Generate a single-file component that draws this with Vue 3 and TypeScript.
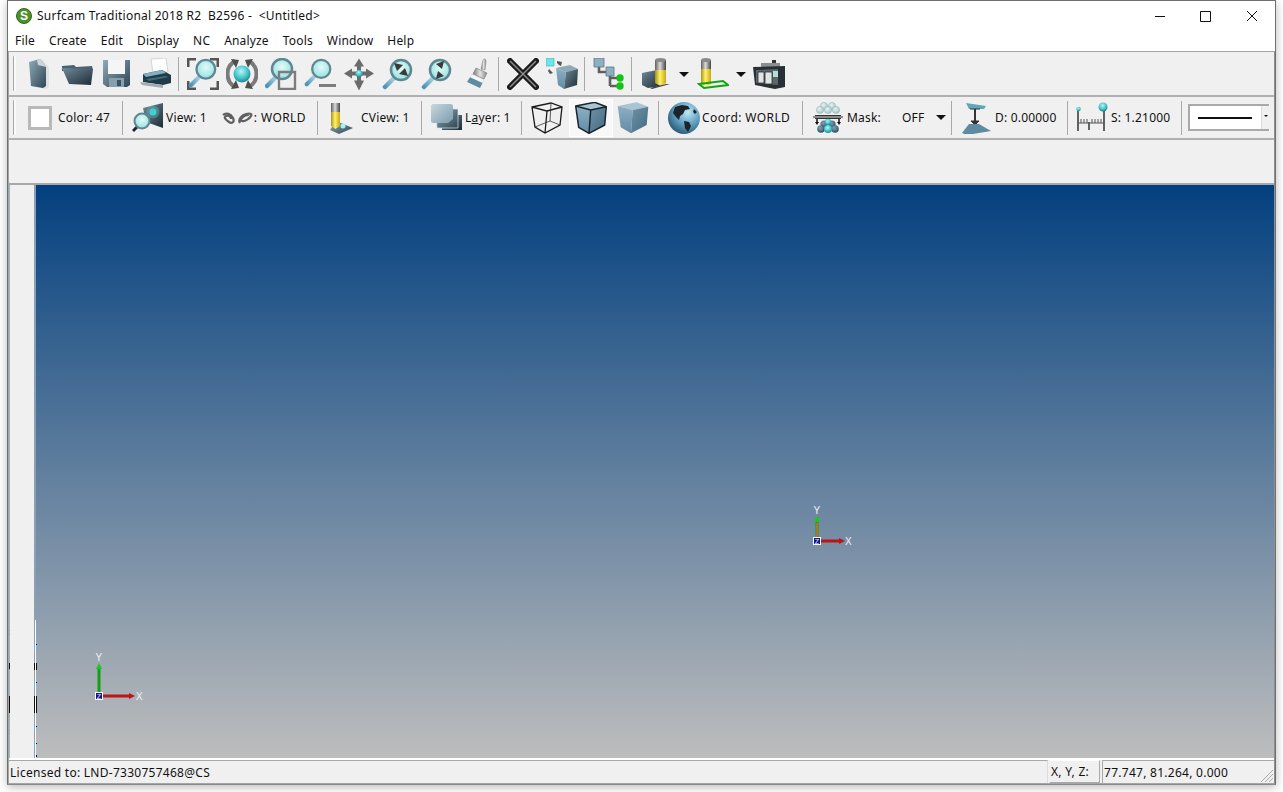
<script setup lang="ts">
// ツールバーの定義
interface Tool {
  icon?: string;
  w: number;
  arrow?: boolean;
}

const menus = ["File", "Create", "Edit", "Display", "NC", "Analyze", "Tools", "Window", "Help"];

const mainTools: Tool[] = [
  { w: 3 },
  { icon: "new", w: 39 },
  { icon: "open", w: 39 },
  { icon: "save", w: 39 },
  { icon: "print", w: 39 },
  { w: 0 },
  { icon: "fit", w: 39 },
  { icon: "orbit", w: 39 },
  { icon: "zwin", w: 39 },
  { icon: "zprev", w: 39 },
  { icon: "pan", w: 39 },
  { icon: "zin", w: 39 },
  { icon: "zout", w: 39 },
  { icon: "brush", w: 39 },
  { w: 0 },
  { icon: "del", w: 39 },
  { icon: "xform", w: 39 },
  { w: 0 },
  { icon: "tree", w: 39 },
  { w: 0 },
  { icon: "tool", w: 57, arrow: true },
  { icon: "tool2", w: 56, arrow: true },
  { icon: "machine", w: 39 }
];

// 左パネル下部に残る描画ノイズ（座標は画面基準）
const ticks = [
  { x: 35, y: 620, h: 138, c: "#fff" },
  { x: 9, y: 663, h: 6, c: "#111" },
  { x: 9, y: 696, h: 17, c: "#111" },
  { x: 9, y: 630, h: 1, c: "#999" },
  { x: 9, y: 634, h: 1, c: "#999" },
  { x: 9, y: 669, h: 1, c: "#999" },
  { x: 9, y: 716, h: 1, c: "#999" },
  { x: 9, y: 730, h: 1, c: "#999" },
  { x: 9, y: 733, h: 1, c: "#999" },
  { x: 34, y: 644, h: 6, c: "#5fb6e6" },
  { x: 34, y: 663, h: 7, c: "#111" },
  { x: 36, y: 663, h: 7, c: "#111" },
  { x: 34, y: 682, h: 6, c: "#5fb6e6" },
  { x: 34, y: 696, h: 17, c: "#111" },
  { x: 36, y: 696, h: 17, c: "#111" },
  { x: 34, y: 726, h: 5, c: "#5fb6e6" },
  { x: 34, y: 743, h: 6, c: "#5fb6e6" },
  { x: 36, y: 644, h: 1, c: "#111" },
  { x: 36, y: 682, h: 1, c: "#111" },
  { x: 36, y: 726, h: 1, c: "#111" },
  { x: 36, y: 743, h: 1, c: "#111" },
  { x: 36, y: 755, h: 2, c: "#111" }
];
</script>

<template>
  <svg class="defs" width="0" height="0" aria-hidden="true">
    <defs>
      <linearGradient id="steel" x1="0" y1="0" x2="1" y2="1">
        <stop offset="0" stop-color="#8fabb9" />
        <stop offset="1" stop-color="#2f4653" />
      </linearGradient>
      <linearGradient id="dark" x1="0" y1="0" x2="1" y2="1">
        <stop offset="0" stop-color="#6f8b99" />
        <stop offset="1" stop-color="#1d2c35" />
      </linearGradient>
      <linearGradient id="pale" x1="0" y1="0" x2="1" y2="1">
        <stop offset="0" stop-color="#c9d7de" />
        <stop offset="1" stop-color="#7b9cae" />
      </linearGradient>
      <radialGradient id="lens" cx="0.5" cy="0.4" r="0.6">
        <stop offset="0" stop-color="#e2faf7" />
        <stop offset="1" stop-color="#97e0df" />
      </radialGradient>
      <radialGradient id="ball" cx="0.45" cy="0.35" r="0.65">
        <stop offset="0" stop-color="#b9f5f2" />
        <stop offset="0.6" stop-color="#45c4ca" />
        <stop offset="1" stop-color="#20858f" />
      </radialGradient>
      <radialGradient id="sphere" cx="0.4" cy="0.35" r="0.7">
        <stop offset="0" stop-color="#e4f2f2" />
        <stop offset="1" stop-color="#9fc4c6" />
      </radialGradient>
      <radialGradient id="sphered" cx="0.4" cy="0.35" r="0.7">
        <stop offset="0" stop-color="#7fa4b6" />
        <stop offset="1" stop-color="#2b4a5c" />
      </radialGradient>
      <linearGradient id="handle" x1="0" y1="1" x2="1" y2="0">
        <stop offset="0" stop-color="#4d93b5" />
        <stop offset="1" stop-color="#a9d6e6" />
      </linearGradient>
      <linearGradient id="cyl" x1="0" y1="0" x2="1" y2="0">
        <stop offset="0" stop-color="#5f5f5f" />
        <stop offset="0.45" stop-color="#dadada" />
        <stop offset="1" stop-color="#444" />
      </linearGradient>
      <linearGradient id="yel" x1="0" y1="0" x2="1" y2="0">
        <stop offset="0" stop-color="#a89317" />
        <stop offset="0.45" stop-color="#fff26a" />
        <stop offset="1" stop-color="#c9a812" />
      </linearGradient>
      <linearGradient id="cubel" x1="0" y1="0" x2="0" y2="1">
        <stop offset="0" stop-color="#8db0c4" />
        <stop offset="1" stop-color="#628ba6" />
      </linearGradient>
      <linearGradient id="cuber" x1="0" y1="0" x2="1" y2="1">
        <stop offset="0" stop-color="#6e93a9" />
        <stop offset="1" stop-color="#446a80" />
      </linearGradient>
      <linearGradient id="metal" x1="0" y1="0" x2="1" y2="0">
        <stop offset="0" stop-color="#777" />
        <stop offset="0.5" stop-color="#e2e2e2" />
        <stop offset="1" stop-color="#888" />
      </linearGradient>
      <radialGradient id="earth" cx="0.62" cy="0.32" r="0.8">
        <stop offset="0" stop-color="#bfe6f5" />
        <stop offset="0.5" stop-color="#5d9ec0" />
        <stop offset="1" stop-color="#1c4660" />
      </radialGradient>

      <symbol id="i-new" viewBox="0 0 32 32">
        <path d="M7 4l11-3 6 8v19l-3 2-12-2z" fill="#d0d0d0" transform="translate(2 1)" opacity=".5" />
        <path d="M6 4l11-3 6 8v19l-3 2-12-2z" fill="url(#steel)" />
        <path d="M14 2l3-1 6 8-8-2z" fill="#c9d8e0" />
      </symbol>
      <symbol id="i-open" viewBox="0 0 32 32">
        <path d="M0 8l12-1 2 2 16-1 1 4-31 1z" fill="#49626e" />
        <path d="M0 10l31 1-2 16-22-1z" fill="url(#dark)" />
      </symbol>
      <symbol id="i-save" viewBox="0 0 32 32">
        <path d="M2 2h27v25l-3 2H6l-4-3z" fill="url(#steel)" />
        <path d="M7 2h17v14H7z" fill="#f5f5f5" />
        <path d="M8 20h15v9H8z" fill="#88a0ad" />
        <path d="M16 22h4v6h-4z" fill="#3c5361" />
      </symbol>
      <symbol id="i-print" viewBox="0 0 32 32">
        <path d="M11 1l15-1 2 14-15 1z" fill="#fdfdfd" stroke="#bdbdbd" stroke-width=".6" />
        <path d="M3 16l19-4 9 5v8l-8 2-20-3z" fill="#1f3a48" />
        <path d="M3 16l19-4 4 3-20 4z" fill="#7fb0c4" />
        <path d="M6 21l19-3 4 1-20 4z" fill="#46697a" />
        <path d="M0 24l23 3v3L2 27z" fill="#a2abaf" />
      </symbol>
      <symbol id="i-lens" viewBox="0 0 32 32">
        <path d="M12 20L3 29" stroke="url(#handle)" stroke-width="4.500" stroke-linecap="round" />
        <circle cx="19" cy="12" r="10" fill="url(#lens)" stroke="#5e8795" stroke-width="2.500" />
      </symbol>
      <symbol id="i-fit" viewBox="0 0 32 32">
        <path d="M1 9V1h8M23 1h8v8M31 23v8h-8M9 31H1v-8" fill="none" stroke="#555" stroke-width="3" />
        <use href="#i-lens" x="1" y="0" width="30" height="30" />
      </symbol>
      <symbol id="i-orbit" viewBox="0 0 32 32">
        <path d="M9 3C-1 9-1 23 9 29M23 3c10 6 10 20 0 26" fill="none" stroke="#7a7a7a" stroke-width="4" />
        <path d="M5 1l8 1-3 8zM27 1l-8 1 3 8zM5 31l8-1-3-8zM27 31l-8-1 3-8z" fill="#4e4e4e" />
        <circle cx="16" cy="16" r="8.500" fill="url(#ball)" />
      </symbol>
      <symbol id="i-zwin" viewBox="0 0 32 32">
        <path d="M11 19L2 28" stroke="url(#handle)" stroke-width="4.500" stroke-linecap="round" />
        <circle cx="17" cy="11" r="10" fill="url(#lens)" stroke="#5e8795" stroke-width="2.500" />
        <path d="M14 14h16v17H14z" fill="none" stroke="#7d7d7d" stroke-width="2.400" />
      </symbol>
      <symbol id="i-zprev" viewBox="0 0 32 32">
        <use href="#i-lens" width="29" height="29" />
        <path d="M15 26h17v3H15z" fill="#7d7d7d" />
      </symbol>
      <symbol id="i-pan" viewBox="0 0 32 32">
        <path d="M16 1l5 8h-3v5h5v-3l8 5-8 5v-3h-5v5h3l-5 10-5-10h3v-5H9v3l-8-5 8-5v3h5V9h-3z" fill="#6b6b6b" transform="translate(0 -.5)" />
        <circle cx="16" cy="15.500" r="3.600" fill="url(#ball)" />
      </symbol>
      <symbol id="i-zin" viewBox="0 0 32 32">
        <use href="#i-lens" />
        <path d="M13 6l9 2-6 6zM27 19l-9-2 6-6z" fill="#3a3a3a" transform="translate(-1 -1)" />
      </symbol>
      <symbol id="i-zout" viewBox="0 0 32 32">
        <use href="#i-lens" />
        <path d="M23 3l-2 8-6-5zM15 21l2-8 6 5z" fill="#3a3a3a" />
      </symbol>
      <symbol id="i-brush" viewBox="0 0 32 32">
        <path d="M21 11l2-9c1-2 3-1 3 1l-1 9z" fill="url(#metal)" stroke="#8a8a8a" stroke-width=".6" />
        <path d="M16 10l11 5-3 6-11-5z" fill="url(#metal)" stroke="#777" stroke-width=".6" />
        <path d="M12 16l12 6-4 8-13-6z" fill="#5f8ba3" />
        <path d="M12 16l12 6-1.500 3-13-6z" fill="#f7f7f7" />
      </symbol>
      <symbol id="i-del" viewBox="0 0 32 32">
        <path d="M3 3l26 26M29 3L3 29" stroke="#1c1c1c" stroke-width="6" stroke-linecap="round" />
        <path d="M3 3l26 26M29 3L3 29" stroke="#8c8c8c" stroke-width="1.500" />
      </symbol>
      <symbol id="i-xform" viewBox="0 0 32 32">
        <path d="M0 0h8v8H0z" fill="#6be6ea" stroke="#4fa5a8" stroke-width=".6" />
        <path d="M11 3l5 1-1 4-2-1-2-2zM3 11l4 4-3 1-2-3z" fill="#555" />
        <path d="M10 10l14-3 8 4-12 3z" fill="#8fa9b7" />
        <path d="M10 10l10 4-2 17-6-4z" fill="url(#cubel)" />
        <path d="M20 14l12-3-1 16-13 4z" fill="url(#dark)" />
      </symbol>
      <symbol id="i-tree" viewBox="0 0 32 32">
        <path d="M6 9v5h8M17 18v10M17 20h7M17 28h7" fill="none" stroke="#5f5f5f" stroke-width="2.600" />
        <path d="M1 0h10v9H1zM13 9h8v9h-8z" fill="#8dafc1" stroke="#5c7787" stroke-width=".8" />
        <circle cx="27" cy="20" r="3.700" fill="#14c414" />
        <circle cx="27" cy="28" r="3.700" fill="#14c414" />
      </symbol>
      <symbol id="i-tool" viewBox="0 0 32 32">
        <path d="M2 15l15-3 4 2v14L8 30l-6-3z" fill="url(#dark)" />
        <path d="M15 2h11v10H15z" fill="url(#cyl)" />
        <ellipse cx="20.500" cy="2" rx="5.500" ry="2" fill="#8a8a8a" />
        <path d="M15 12h11v13l-5.500 3-5.500-3z" fill="url(#yel)" />
        <path d="M10 30l16-4 4 0-18 5z" fill="#444" />
      </symbol>
      <symbol id="i-tool2" viewBox="0 0 32 32">
        <path d="M4 2h10v9H4z" fill="url(#cyl)" />
        <ellipse cx="9" cy="2" rx="5" ry="2" fill="#8a8a8a" />
        <path d="M4 11h10v15l-5 2-5-2z" fill="url(#yel)" />
        <path d="M2 26l24-3 5 4-24 3z" fill="none" stroke="#14a514" stroke-width="2" />
      </symbol>
      <symbol id="i-machine" viewBox="0 0 32 32">
        <path d="M19 2h4v4h-4z" fill="#333" />
        <path d="M8 5h19v4H8z" fill="#8b8f91" />
        <path d="M0 9l32-1v21l-10 2-20-4z" fill="#263036" />
        <path d="M3 12l22-1v16L3 25z" fill="#5d676c" />
        <path d="M5 14h6v11H5zM12 14h7v12h-7z" fill="#dfe5e7" stroke="#2b2b2b" stroke-width=".8" />
        <path d="M20 13h5v6h-5z" fill="#b4dfdb" />
      </symbol>
      <symbol id="i-view" viewBox="0 0 32 32">
        <path d="M11 6l20-5v25l-17-6z" fill="url(#dark)" />
        <circle cx="21" cy="10" r="6.500" fill="#6fc8cc" opacity=".35" />
        <circle cx="21" cy="10" r="3.500" fill="#3fd0d6" />
        <path d="M5 25l-4 4" stroke="#223" stroke-width="3" />
        <circle cx="10" cy="19" r="7.500" fill="url(#lens)" stroke="#5e8795" stroke-width="2" />
      </symbol>
      <symbol id="i-link" viewBox="0 0 34 14">
        <path d="M3 4c3-3 8-1 10 3s-1 6-4 4-6-5-3-6 5 1 5 3" fill="none" stroke="#5f5f5f" stroke-width="2.200" />
        <path d="M20 12c-2-3 1-8 6-9s6 0 5 2-6 6-9 5 1-6 7-6" fill="none" stroke="#5f5f5f" stroke-width="2.200" />
      </symbol>
      <symbol id="i-cview" viewBox="0 0 32 32">
        <path d="M4 1h9v9H4z" fill="url(#cyl)" />
        <path d="M3 28l6-9 17 7-14 6z" fill="url(#steel)" />
        <path d="M4 10h9v14l-4.500 3L4 24z" fill="url(#yel)" />
        <circle cx="16" cy="24" r="2.500" fill="#a8f0f0" />
      </symbol>
      <symbol id="i-layer" viewBox="0 0 32 32">
        <path d="M10 13h21v15H11z" fill="url(#dark)" />
        <path d="M5 7h22v19H6z" fill="url(#steel)" stroke="#dfe8ec" stroke-width=".7" />
        <path d="M0 4c0-1 1-2 2-2h18c1 0 2 1 2 2v13l-5 4H2c-1 0-2-1-2-2z" fill="url(#pale)" />
      </symbol>
      <symbol id="i-wire" viewBox="0 0 32 32">
        <path d="M1 5L20 1l11 4-2 18-15 8-10-6zM1 5l15 4-2 22M16 9l15-4" fill="none" stroke="#1a1a1a" stroke-width="1.300" />
        <path d="M20 1l-1 18-15 6M19 19l10 4" fill="none" stroke="#333" stroke-width=".8" />
      </symbol>
      <symbol id="i-cube" viewBox="0 0 32 32">
        <path d="M.7 4L19.700.3 31.300 4.700 15.700 8z" fill="#a9c4d3" />
        <path d="M.7 4l15 4L14 31.300 3.700 25.300z" fill="url(#cubel)" />
        <path d="M15.700 8l15.600-3.300L29.700 23 14 31.300z" fill="url(#cuber)" />
      </symbol>
      <symbol id="i-cubee" viewBox="0 0 32 32">
        <use href="#i-cube" />
        <path d="M.7 4L19.700.3 31.300 4.700 29.700 23 14 31.300 3.700 25.300zM.7 4l15 4 15.600-3.300M15.700 8L14 31.300" fill="none" stroke="#16242c" stroke-width="1.500" stroke-linejoin="round" />
      </symbol>
      <symbol id="i-globe" viewBox="0 0 32 32">
        <circle cx="16" cy="16" r="16" fill="url(#earth)" />
        <path d="M7 5l7-2 6 1 2 3-5 1-2 4-3 2-1 4-3-3-3-4zM16 19l5 1 2 4-3 6-3-4zM26 7l3 3-2 2-2-2z" fill="#1c2429" />
      </symbol>
      <symbol id="i-mask" viewBox="0 0 32 32">
        <g fill="url(#sphere)" stroke="#8fb0b0" stroke-width=".5">
          <circle cx="12" cy="4" r="3.600" />
          <circle cx="20" cy="4" r="3.600" />
          <circle cx="8" cy="8" r="3.600" />
          <circle cx="16" cy="8" r="3.600" />
          <circle cx="24" cy="8" r="3.600" />
        </g>
        <path d="M1 14h30v2H1z" fill="#8a8a8a" />
        <path d="M3 13h26v1H3zM3 16h26v1H3z" fill="#333" />
        <path d="M5 17v4M27 17v4" stroke="#111" stroke-width="1.500" />
        <path d="M3 20h4l-2 3zM25 20h4l-2 3z" fill="#111" />
        <g fill="url(#sphered)">
          <circle cx="12" cy="22" r="3.600" />
          <circle cx="20" cy="22" r="3.600" />
          <circle cx="9" cy="27" r="3.800" />
          <circle cx="23" cy="27" r="3.800" />
        </g>
        <circle cx="16" cy="20" r="3.200" fill="url(#ball)" />
        <circle cx="16" cy="27" r="4" fill="url(#ball)" />
      </symbol>
      <symbol id="i-depth" viewBox="0 0 32 32">
        <path d="M6 1l20 3-2 3H9z" fill="#5da9b5" />
        <path d="M15 7v14" stroke="#333" stroke-width="2" />
        <path d="M10 7h10M11 19h8l-4 4z" stroke="#333" fill="#333" />
        <path d="M9 22h10l12 7-24 4-5-2z" fill="#5f8ba0" />
      </symbol>
      <symbol id="i-scale" viewBox="0 0 32 32">
        <path d="M2 9v20M28 9v20M13 20v8" stroke="#333" stroke-width="1.500" />
        <path d="M2 21h26M5 17v4M8 17v4M11 17v4M16 17v4M19 17v4M22 17v4M25 17v4" stroke="#555" />
        <circle cx="2.500" cy="7" r="2.200" fill="url(#ball)" />
        <circle cx="27" cy="5" r="4.500" fill="url(#ball)" />
      </symbol>
    </defs>
  </svg>

  <div class="window">
    <header class="titlebar">
      <span class="logo">S</span>
      <span class="title">Surfcam Traditional 2018 R2&nbsp; B2596 -&nbsp; &lt;Untitled&gt;</span>
      <div class="caption">
        <svg width="46" height="30" viewBox="0 0 46 30"><path d="M18 15.500h10" stroke="#111" /></svg>
        <svg width="46" height="30" viewBox="0 0 46 30"><path d="M17.500 10.500h10v10h-10z" fill="none" stroke="#111" /></svg>
        <svg width="46" height="30" viewBox="0 0 46 30"><path d="M18 10l10 10M28 10L18 20" stroke="#111" /></svg>
      </div>
    </header>

    <nav class="menubar">
      <span v-for="m in menus" :key="m">{{ m }}</span>
    </nav>

    <div class="body">
      <div class="toolbar main">
        <i class="grip"></i>
        <template v-for="(t, i) in mainTools" :key="i">
          <i v-if="!t.icon && t.w === 0" class="sep"></i>
          <span v-else-if="!t.icon" :style="{ width: t.w + 'px' }"></span>
          <button v-else class="tool" :class="{ split: t.arrow }" :style="{ width: t.w + 'px' }">
            <svg width="32" height="32"><use :href="'#i-' + t.icon" /></svg>
            <i v-if="t.arrow" class="caret"></i>
          </button>
        </template>
      </div>

      <div class="toolbar second">
        <i class="grip"></i>
        <div class="group g-color"><span class="swatch"></span><span>Color: 47</span></div>
        <i class="sep"></i>
        <div class="group g-view">
          <svg width="32" height="32"><use href="#i-view" /></svg>
          <span>View: 1</span>
          <svg class="link" width="34" height="14"><use href="#i-link" /></svg>
          <span class="caps">: WORLD</span>
        </div>
        <i class="sep"></i>
        <div class="group g-cview"><svg width="32" height="32"><use href="#i-cview" /></svg><span>CView: 1</span></div>
        <i class="sep"></i>
        <div class="group g-layer"><svg width="32" height="32"><use href="#i-layer" /></svg><span>L<u>a</u>yer: 1</span></div>
        <i class="sep"></i>
        <div class="group g-shade">
          <svg width="32" height="32"><use href="#i-wire" /></svg>
          <span class="pressed"><svg width="32" height="32"><use href="#i-cubee" /></svg></span>
          <svg width="32" height="32"><use href="#i-cube" /></svg>
        </div>
        <i class="sep"></i>
        <div class="group g-coord"><svg width="32" height="32"><use href="#i-globe" /></svg><span class="caps">Coord: WORLD</span></div>
        <i class="sep"></i>
        <div class="group g-mask">
          <svg width="32" height="32"><use href="#i-mask" /></svg>
          <span class="mask-label">Mask:</span>
          <span class="mask-value">OFF</span>
          <i class="caret"></i>
        </div>
        <i class="sep"></i>
        <div class="group g-depth"><svg width="32" height="32"><use href="#i-depth" /></svg><span>D: 0.00000</span></div>
        <i class="sep"></i>
        <div class="group g-scale"><svg width="32" height="32"><use href="#i-scale" /></svg><span>S: 1.21000</span></div>
        <i class="sep"></i>
        <div class="linestyle"><b></b><span class="drop"></span></div>
      </div>

      <div class="band"></div>

      <div class="work">
        <aside class="side">
          <i v-for="(t, i) in ticks" :key="i" class="tick" :style="{ left: t.x - 10 + 'px', top: t.y - 185 + 'px', height: t.h + 'px', background: t.c }"></i>
        </aside>
        <main class="viewport">
          <svg class="triad triad-world" width="60" height="60" viewBox="0 0 60 60">
            <path d="M10 44V17" stroke="#14a014" stroke-width="3" />
            <path d="M10 12l3 6H7z" fill="#1ac81a" />
            <path d="M10 45h31" stroke="#c01414" stroke-width="3" />
            <path d="M46 45l-6 3v-6z" fill="#c01414" />
            <rect x="6.500" y="41.500" width="7" height="7" fill="#14148c" stroke="#fff" />
            <text x="10" y="47.500" class="axis small">Z</text>
            <text x="6.500" y="9.500" class="axis">Y</text>
            <text x="47" y="48.500" class="axis">X</text>
          </svg>
          <svg class="triad triad-view" width="60" height="60" viewBox="0 0 60 60">
            <path d="M10 44V25" stroke="#14a014" stroke-width="3" />
            <path d="M10 27v15" stroke="#a87a1c" stroke-width="2" />
            <path d="M10 20l3 6H7z" fill="#1ac81a" />
            <path d="M10 45h23" stroke="#c01414" stroke-width="3" />
            <path d="M38 45l-6 3v-6z" fill="#c01414" />
            <rect x="6.500" y="41.500" width="7" height="7" fill="#14148c" stroke="#fff" />
            <text x="10" y="47.500" class="axis small">Z</text>
            <text x="6.500" y="17.500" class="axis">Y</text>
            <text x="38" y="48.500" class="axis">X</text>
          </svg>
        </main>
      </div>

      <footer class="status">
        <span class="pane license">Licensed to: LND-7330757468@CS</span>
        <span class="pane xyz">X, Y, Z:</span>
        <span class="pane coords">77.747, 81.264, 0.000
          <svg class="resize" width="14" height="14" viewBox="0 0 14 14"><path d="M13 1L1 13M13 5L5 13M13 9l-4 4" stroke="#a9a9a9" fill="none" /></svg>
        </span>
      </footer>
    </div>
  </div>
</template>

<style>
html,
body {
  background: #fff;
  overflow: hidden;
  min-height: 792px;
}
</style>

<style scoped>
.defs {
  position: absolute;
}

.window {
  box-sizing: border-box;
  width: 1269px;
  height: 785px;
  margin-left: 7px;
  background: #fff;
  border: 1px solid #707070;
  border-bottom-color: #8a8a8a;
  box-shadow: 0 2px 9px rgba(0, 0, 0, 0.28);
  display: flex;
  flex-direction: column;
  font: 12px "Noto Sans", sans-serif;
  color: #111;
}

.titlebar {
  height: 29px;
  display: flex;
  align-items: center;
  flex: none;
  position: relative;
  padding-left: 8px;
  font-size: 12px;
  letter-spacing: 0.24px;
}

.logo {
  box-sizing: border-box;
  width: 16px;
  height: 16px;
  border-radius: 50%;
  background: #4f8f2c;
  border: 1px solid #2f6b1a;
  color: #fff;
  font: bold 12px/14px "Liberation Sans", sans-serif;
  text-align: center;
  margin-right: 5px;
}

.caption {
  margin-left: auto;
  display: flex;
  height: 29px;
}

.menubar {
  height: 21px;
  flex: none;
  display: flex;
  align-items: center;
  gap: 14px;
  padding-left: 7px;
  letter-spacing: 0.17px;
}

.body {
  flex: 1;
  min-height: 0;
  display: flex;
  flex-direction: column;
  background: #f0f0f0;
  border: 1px solid #a5a5a5;
  border-right-color: #8f8f8f;
}

.toolbar {
  flex: none;
  display: flex;
  align-items: center;
  padding-left: 4px;
  border-bottom: 2px solid #b0b0b0;
  overflow: hidden;
}

.main {
  height: 43px;
}

.second {
  height: 41px;
  letter-spacing: 0.2px;
}

.caps {
  letter-spacing: 0.4px;
}

.grip {
  flex: none;
  width: 2px;
  height: 35px;
  background: #fafafa;
  border-left: 1px solid #a8a8a8;
  border-radius: 1px;
}

.sep {
  flex: none;
  width: 1px;
  height: 34px;
  background: #a8a8a8;
  margin: 0 4px 0 3px;
}

.second .sep {
  margin: 0;
}

.tool {
  flex: none;
  height: 34px;
  padding: 0;
  border: 0;
  background: none;
  display: flex;
  align-items: center;
  position: relative;
  justify-content: center;
}

.tool.split {
  justify-content: flex-start;
  padding-left: 4px;
  box-sizing: border-box;
}

.caret {
  flex: none;
  width: 0;
  height: 0;
  border-left: 5px solid transparent;
  border-right: 5px solid transparent;
  border-top: 5px solid #111;
}

.tool .caret {
  position: absolute;
  left: 43px;
  top: 15px;
}

.group {
  flex: none;
  display: flex;
  align-items: center;
  gap: 2px;
  padding-left: 9px;
  box-sizing: border-box;
  white-space: nowrap;
}

.g-color {
  width: 106px;
  padding-left: 12px;
  gap: 6px;
}

.swatch {
  box-sizing: border-box;
  width: 24px;
  height: 24px;
  background: #fff;
  border: 3px solid #b9b9b9;
}

.g-view {
  width: 194px;
}

.link {
  margin-left: 11px;
  margin-right: -2px;
}

.g-cview {
  width: 103px;
  padding-left: 9px;
}

.g-layer {
  width: 99px;
}

.g-shade {
  width: 136px;
  gap: 0;
  padding-left: 9px;
}

.pressed {
  display: flex;
  width: 42px;
  height: 36px;
  align-items: center;
  justify-content: center;
  margin: 0 5px 0 7px;
  background: #f8f8f8;
  outline: 1px solid #fff;
}

.g-coord {
  width: 143px;
}

.g-mask {
  width: 148px;
  gap: 0;
}

.mask-label {
  margin-left: 3px;
  width: 55px;
}

.mask-value {
  width: 34px;
}

.g-depth {
  width: 115px;
  padding-left: 8px;
  gap: 3px;
}

.g-scale {
  width: 113px;
  padding-left: 8px;
  gap: 3px;
}

.linestyle {
  flex: none;
  box-sizing: border-box;
  width: 81px;
  height: 27px;
  margin-left: 6px;
  background: #fff;
  border: 2px solid #a9a9a9;
  border-right: 0;
  position: relative;
  display: flex;
  align-items: center;
}

.linestyle b {
  display: block;
  width: 54px;
  height: 2px;
  background: #111;
  margin-left: 8px;
}

.drop {
  position: absolute;
  right: 0;
  top: 0;
  bottom: 0;
  width: 7px;
  background: #f0f0f0;
  border-left: 1px solid #ddd;
}

.drop::after {
  content: "";
  position: absolute;
  left: 2px;
  top: 9px;
  border-left: 2px solid transparent;
  border-right: 2px solid transparent;
  border-top: 2px solid #111;
}

.band {
  height: 43px;
  flex: none;
  border-bottom: 2px solid #a8a8a8;
}

.work {
  flex: 1;
  min-height: 0;
  display: flex;
}

.side {
  flex: none;
  box-sizing: border-box;
  width: 27px;
  position: relative;
  z-index: 1;
  border-left: 1px solid #9db3c6;
  border-right: 2px solid #8aa0b4;
  background: #f0f0f0;
}

.tick {
  position: absolute;
  width: 1px;
}

.viewport {
  flex: 1;
  position: relative;
  background: linear-gradient(#03407f, #bdbdbd);
}

.triad {
  position: absolute;
  overflow: visible;
}

.triad-world {
  left: 53px;
  top: 466px;
}

.triad-view {
  left: 771px;
  top: 311px;
}

.axis {
  font: 10px "Liberation Sans", sans-serif;
  fill: #f2f2f2;
}

.axis.small {
  font-size: 7px;
  text-anchor: middle;
}

.status {
  height: 25px;
  flex: none;
  display: flex;
  gap: 2px;
  border-top: 2px solid #fff;
  box-sizing: border-box;
  letter-spacing: 0.27px;
}

.pane {
  box-sizing: border-box;
  display: flex;
  align-items: center;
  white-space: nowrap;
  padding-left: 1px;
  position: relative;
}

.license {
  flex: none;
  width: 1039px;
  padding-left: 1px;
  border-top: 1px solid #a8a8a8;
  border-right: 1px solid #dcdcdc;
}

.xyz {
  flex: none;
  width: 50px;
  border-top: 1px solid #fff;
  border-bottom: 1px solid #a8a8a8;
  border-right: 1px solid #a8a8a8;
}

.coords {
  flex: 1;
  border-left: 1px solid #a8a8a8;
  border-top: 1px solid #a8a8a8;
}

.resize {
  position: absolute;
  right: 0;
  bottom: 0;
}
</style>
